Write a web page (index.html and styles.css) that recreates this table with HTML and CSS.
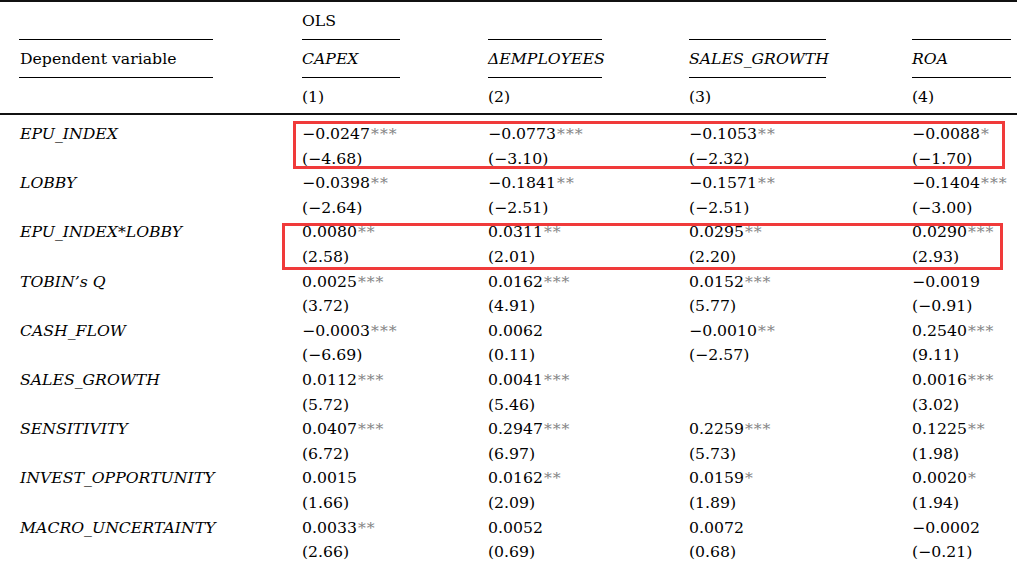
FILE: index.html
```html
<!DOCTYPE html>
<html>
<head>
<meta charset="utf-8">
<link rel="stylesheet" href="styles.css">
</head>
<body>
<div class="tbl">
  <div class="rule"></div>
  <div class="grid head">
    <div class="hc line w0"></div>
    <div class="hc line w1">OLS</div>
    <div class="hc line w2"></div>
    <div class="hc line w3"></div>
    <div class="hc line w4"></div>

    <div class="hc line w0 lab">Dependent variable</div>
    <div class="hc line w1 it">CAPEX</div>
    <div class="hc line w2 it">&Delta;EMPLOYEES</div>
    <div class="hc line w3 it">SALES_GROWTH</div>
    <div class="hc line w4 it">ROA</div>

    <div class="hc last w0"></div>
    <div class="hc last w1">(1)</div>
    <div class="hc last w2">(2)</div>
    <div class="hc last w3">(3)</div>
    <div class="hc last w4">(4)</div>
  </div>
  <div class="rule"></div>
  <div class="grid body">
    <div class="lab it">EPU_INDEX</div>
    <div class="num">&minus;0.0247<span class="st">***</span><br>(&minus;4.68)</div>
    <div class="num">&minus;0.0773<span class="st">***</span><br>(&minus;3.10)</div>
    <div class="num">&minus;0.1053<span class="st">**</span><br>(&minus;2.32)</div>
    <div class="num">&minus;0.0088<span class="st">*</span><br>(&minus;1.70)</div>

    <div class="lab it">LOBBY</div>
    <div class="num">&minus;0.0398<span class="st">**</span><br>(&minus;2.64)</div>
    <div class="num">&minus;0.1841<span class="st">**</span><br>(&minus;2.51)</div>
    <div class="num">&minus;0.1571<span class="st">**</span><br>(&minus;2.51)</div>
    <div class="num">&minus;0.1404<span class="st">***</span><br>(&minus;3.00)</div>

    <div class="lab it">EPU_INDEX*LOBBY</div>
    <div class="num">0.0080<span class="st">**</span><br>(2.58)</div>
    <div class="num">0.0311<span class="st">**</span><br>(2.01)</div>
    <div class="num">0.0295<span class="st">**</span><br>(2.20)</div>
    <div class="num">0.0290<span class="st">***</span><br>(2.93)</div>

    <div class="lab it">TOBIN&rsquo;s Q</div>
    <div class="num">0.0025<span class="st">***</span><br>(3.72)</div>
    <div class="num">0.0162<span class="st">***</span><br>(4.91)</div>
    <div class="num">0.0152<span class="st">***</span><br>(5.77)</div>
    <div class="num">&minus;0.0019<br>(&minus;0.91)</div>

    <div class="lab it">CASH_FLOW</div>
    <div class="num">&minus;0.0003<span class="st">***</span><br>(&minus;6.69)</div>
    <div class="num">0.0062<br>(0.11)</div>
    <div class="num">&minus;0.0010<span class="st">**</span><br>(&minus;2.57)</div>
    <div class="num">0.2540<span class="st">***</span><br>(9.11)</div>

    <div class="lab it">SALES_GROWTH</div>
    <div class="num">0.0112<span class="st">***</span><br>(5.72)</div>
    <div class="num">0.0041<span class="st">***</span><br>(5.46)</div>
    <div class="num"></div>
    <div class="num">0.0016<span class="st">***</span><br>(3.02)</div>

    <div class="lab it">SENSITIVITY</div>
    <div class="num">0.0407<span class="st">***</span><br>(6.72)</div>
    <div class="num">0.2947<span class="st">***</span><br>(6.97)</div>
    <div class="num">0.2259<span class="st">***</span><br>(5.73)</div>
    <div class="num">0.1225<span class="st">**</span><br>(1.98)</div>

    <div class="lab it">INVEST_OPPORTUNITY</div>
    <div class="num">0.0015<br>(1.66)</div>
    <div class="num">0.0162<span class="st">**</span><br>(2.09)</div>
    <div class="num">0.0159<span class="st">*</span><br>(1.89)</div>
    <div class="num">0.0020<span class="st">*</span><br>(1.94)</div>

    <div class="lab it">MACRO_UNCERTAINTY</div>
    <div class="num">0.0033<span class="st">**</span><br>(2.66)</div>
    <div class="num">0.0052<br>(0.69)</div>
    <div class="num">0.0072<br>(0.68)</div>
    <div class="num">&minus;0.0002<br>(&minus;0.21)</div>
  </div>
  <div class="box box1"></div>
  <div class="box box2"></div>
</div>
</body>
</html>
```

FILE: styles.css
```css
html, body {
  margin: 0;
  padding: 0;
  background: #fff;
}
.tbl {
  position: relative;
  width: 1017px;
  font-family: "DejaVu Serif", "Liberation Serif", serif;
  font-size: 15.7px;
  color: #000;
}
.rule {
  height: 2px;
  background: #111;
}
.grid {
  display: grid;
  grid-template-columns: 302px 186px 201px 223px 105px;
}
.hc {
  line-height: 24px;
  padding: 7px 0 6px;
}
.hc.line {
  border-bottom: 1px solid #000;
}
.hc.last {
  padding-bottom: 4px;
}
.w0 { margin-left: 19px; width: 194px; }
.w1 { width: 98px; }
.w2 { width: 114px; }
.w3 { width: 137px; }
.w4 { width: 99px; }
.hc.lab { padding-left: 1px; width: 193px; }
.it { font-style: italic; }
.body {
  padding-top: 7px;
  line-height: 24.6px;
}
.body .lab {
  padding-left: 20px;
}
.body > div {
  height: 49.2px;
}
.st {
  color: #858585;
  letter-spacing: 1px;
  margin-left: 1px;
}
.box {
  position: absolute;
  border: 3px solid #f03a3a;
  box-sizing: border-box;
}
.box1 {
  left: 293px;
  top: 121px;
  width: 712px;
  height: 48px;
}
.box2 {
  left: 282px;
  top: 223px;
  width: 721px;
  height: 47px;
}
```
